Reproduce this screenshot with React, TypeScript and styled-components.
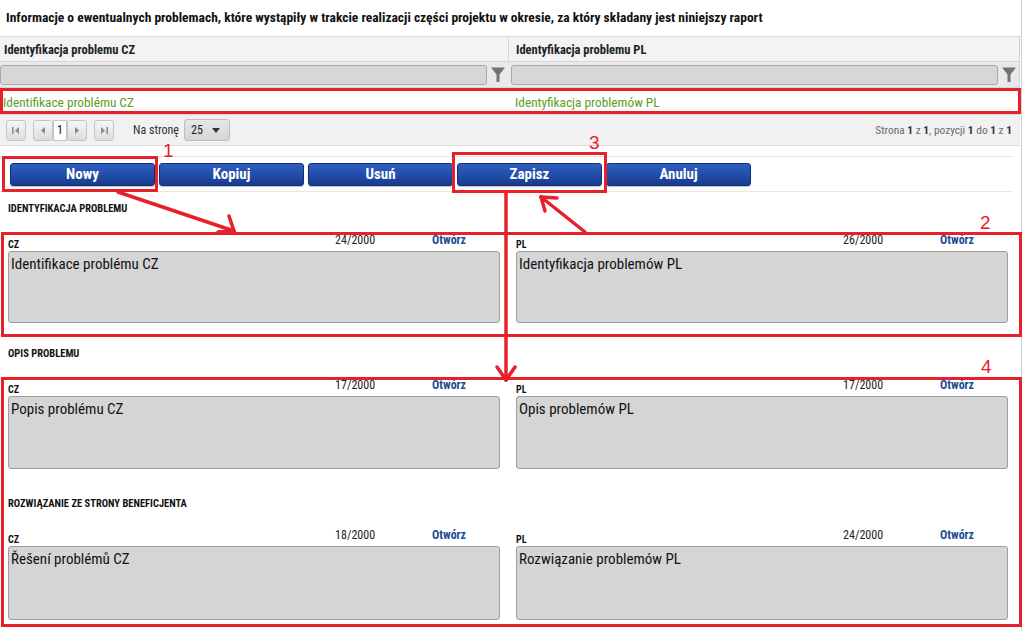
import React from 'react';
import styled, { createGlobalStyle } from 'styled-components';

const FONT = `"Roboto Condensed", "Liberation Sans", sans-serif`;

const Global = createGlobalStyle`
  html, body { margin: 0; padding: 0; background: #fff; }
  body { font-family: ${FONT}; color: #111; overflow: hidden; }
  * { box-sizing: border-box; }
`;

const Page = styled.div`
  position: relative;
  width: 1024px;
  height: 631px;
  overflow: hidden;
  background: #fff;
`;

const Frame = styled.div`
  width: 1022px;
  height: 631px;
  border-right: 1px solid #cdd3dc;
`;

const Title = styled.div`
  height: 37px;
  display: flex;
  align-items: center;
  padding: 0 0 2px 6px;
  font-size: 13.5px;
  font-weight: bold;
  color: #111;
  border-bottom: 1px solid #dcdcdc;
`;

const Grid = styled.div`
  width: 1020px;
  border-right: 1px solid #d0d0d0;
`;

const Row = styled.div<{ $h: number; $bg: string }>`
  display: grid;
  grid-template-columns: 508px 1fr;
  height: ${(p) => p.$h}px;
  background: ${(p) => p.$bg};
  border-bottom: 1px solid #d6d6d6;
`;

const HeadCell = styled.div`
  display: flex;
  align-items: center;
  padding: 1px 0 0 4px;
  font-size: 12.5px;
  font-weight: bold;
  color: #222;
  & + & { border-left: 1px solid #d8d8d8; padding-left: 7px; }
`;

const FilterCell = styled.div`
  display: flex;
  align-items: center;
  gap: 3px;
  padding: 0 2px 0 0;
  & + & { padding-left: 3px; }
`;

const FilterInput = styled.div`
  flex: 1;
  height: 20px;
  background: #d7d7d7;
  border: 1px solid #a9a9a9;
  border-radius: 3px;
`;

const Funnel = () => (
  <svg width="16" height="17" viewBox="0 0 16 17">
    <path d="M1 1.5 H15 L9.5 8.5 V16 H6.5 V8.5 Z" fill="#737373" />
  </svg>
);

const DataCell = styled.div`
  display: flex;
  align-items: center;
  padding: 2px 0 0 3px;
  font-size: 13.3px;
  color: #5a9e1c;
  & + & { padding-left: 7px; }
`;

const Pager = styled.div`
  height: 31px;
  display: flex;
  align-items: center;
  padding: 0 8px 0 6px;
  background: #f1f1f1;
  border-bottom: 1px solid #dcdcdc;
  width: 1020px;
`;

const PagerBtn = styled.div<{ $ml?: number }>`
  width: 20px;
  height: 21px;
  margin-left: ${(p) => p.$ml ?? 0}px;
  display: flex;
  align-items: center;
  justify-content: center;
  border: 1px solid #c4c4c4;
  border-radius: 3px;
  background: linear-gradient(#f7f7f7, #dcdcdc);
`;

const PageInput = styled.div`
  width: 14px;
  height: 21px;
  display: flex;
  align-items: center;
  justify-content: center;
  background: #fff;
  border: 1px solid #c4c4c4;
  font-size: 12px;
  color: #111;
`;

const PerPage = styled.span`
  margin-left: 19px;
  font-size: 12px;
  color: #333;
`;

const Select = styled.div`
  margin-left: 5px;
  width: 46px;
  height: 22px;
  display: flex;
  align-items: center;
  justify-content: space-between;
  padding: 0 9px 0 6px;
  background: linear-gradient(#e6e6e6, #d6d6d6);
  border: 1px solid #bcbcbc;
  border-radius: 3px;
  font-size: 12px;
  color: #222;
`;

const PagerInfo = styled.span`
  margin-left: auto;
  font-size: 11.4px;
  color: #6a6a6a;
  b { color: #333; }
`;

const Toolbar = styled.div`
  margin-top: 10px;
  width: 1012px;
  height: 36px;
  display: flex;
  align-items: center;
  gap: 4px;
  padding-left: 10px;
  border-top: 1px solid #e6e6e6;
  border-bottom: 1px solid #e6e6e6;
`;

const Button = styled.div`
  width: 145px;
  height: 23px;
  display: flex;
  align-items: center;
  justify-content: center;
  color: #fff;
  font-size: 15px;
  font-weight: bold;
  border-radius: 3px;
  border: 1px solid #142f7a;
  background: linear-gradient(#2f5ec0 0%, #2450ad 45%, #173b8c 100%);
  box-shadow: 0 1px 1px rgba(0, 0, 0, 0.25);
`;

const Section = styled.div<{ $mt: number }>`
  padding: ${(p) => p.$mt}px 17px 0 8px;
`;

const SectionTitle = styled.div`
  height: 11px;
  padding-top: 1px;
  line-height: 10px;
  font-size: 10.5px;
  font-weight: bold;
  color: #111;
  text-transform: uppercase;
`;

const Fields = styled.div`
  margin-top: 23px;
  display: grid;
  grid-template-columns: 492px 492px;
  column-gap: 16px;
`;

const FieldHead = styled.div`
  height: 14px;
  display: flex;
  align-items: flex-end;
  padding-bottom: 1px;
`;

const Lang = styled.span`
  font-size: 10px;
  font-weight: bold;
  color: #111;
  line-height: 10px;
`;

const Counter = styled.span`
  margin-left: auto;
  margin-right: 57px;
  font-size: 12px;
  color: #222;
  line-height: 12px;
  align-self: flex-start;
  margin-top: -3px;
`;

const Open = styled.span`
  margin-right: 34px;
  font-size: 12px;
  font-weight: bold;
  color: #1d4a92;
  line-height: 12px;
  align-self: flex-start;
  margin-top: -3px;
`;

const TextBox = styled.div<{ $h: number }>`
  height: ${(p) => p.$h}px;
  background: #d5d5d5;
  border: 1px solid #9d9d9d;
  border-radius: 3px;
  padding: 4px 2px;
  font-size: 15px;
  color: #111;
  line-height: 17px;
`;

const Overlay = styled.svg`
  position: absolute;
  left: 0;
  top: 0;
  pointer-events: none;
`;

const Num = styled.text`
  font-family: "Liberation Sans", sans-serif;
  font-size: 19px;
  fill: #e8202a;
`;

const Tri = ({ dir }: { dir: 'l' | 'r' }) => (
  <svg width="8" height="9" viewBox="0 0 8 9">
    {dir === 'l' ? <path d="M6 1 L2 4.5 L6 8 Z" fill="#8a8a8a" /> : <path d="M2 1 L6 4.5 L2 8 Z" fill="#8a8a8a" />}
  </svg>
);

const First = () => (
  <svg width="10" height="9" viewBox="0 0 10 9">
    <rect x="1" y="1" width="1.6" height="7" fill="#8a8a8a" />
    <path d="M8 1 L4 4.5 L8 8 Z" fill="#8a8a8a" />
  </svg>
);

const Last = () => (
  <svg width="10" height="9" viewBox="0 0 10 9">
    <path d="M2 1 L6 4.5 L2 8 Z" fill="#8a8a8a" />
    <rect x="7.4" y="1" width="1.6" height="7" fill="#8a8a8a" />
  </svg>
);

type F = { lang: string; count: string; text: string };
const FieldCol = ({ f, h }: { f: F; h: number }) => (
  <div>
    <FieldHead>
      <Lang>{f.lang}</Lang>
      <Counter>{f.count}</Counter>
      <Open>Otwórz</Open>
    </FieldHead>
    <TextBox $h={h}>{f.text}</TextBox>
  </div>
);

const sections: { title: string; mt: number; h: number; fields: F[] }[] = [
  {
    title: 'Identyfikacja problemu',
    mt: 11,
    h: 72,
    fields: [
      { lang: 'CZ', count: '24/2000', text: 'Identifikace problému CZ' },
      { lang: 'PL', count: '26/2000', text: 'Identyfikacja problemów PL' },
    ],
  },
  {
    title: 'Opis problemu',
    mt: 25,
    h: 73,
    fields: [
      { lang: 'CZ', count: '17/2000', text: 'Popis problému CZ' },
      { lang: 'PL', count: '17/2000', text: 'Opis problemów PL' },
    ],
  },
  {
    title: 'Rozwiązanie ze strony beneficjenta',
    mt: 29,
    h: 74,
    fields: [
      { lang: 'CZ', count: '18/2000', text: 'Řešení problémů CZ' },
      { lang: 'PL', count: '24/2000', text: 'Rozwiązanie problemów PL' },
    ],
  },
];

const RED = '#e8202a';

export default function App() {
  return (
    <Page>
      <Global />
      <Frame>
        <Title>
          Informacje o ewentualnych problemach, które wystąpiły w trakcie realizacji części projektu w okresie, za który składany jest niniejszy raport
        </Title>
        <Grid>
          <Row $h={25} $bg="#f3f3f3">
            <HeadCell>Identyfikacja problemu CZ</HeadCell>
            <HeadCell>Identyfikacja problemu PL</HeadCell>
          </Row>
          <Row $h={26} $bg="#e9e9e9">
            <FilterCell>
              <FilterInput />
              <Funnel />
            </FilterCell>
            <FilterCell>
              <FilterInput />
              <Funnel />
            </FilterCell>
          </Row>
          <Row $h={27} $bg="#ffffff">
            <DataCell>Identifikace problému CZ</DataCell>
            <DataCell>Identyfikacja problemów PL</DataCell>
          </Row>
        </Grid>
        <Pager>
          <PagerBtn>
            <First />
          </PagerBtn>
          <PagerBtn $ml={7}>
            <Tri dir="l" />
          </PagerBtn>
          <PageInput>1</PageInput>
          <PagerBtn>
            <Tri dir="r" />
          </PagerBtn>
          <PagerBtn $ml={7}>
            <Last />
          </PagerBtn>
          <PerPage>Na stronę</PerPage>
          <Select>
            <span>25</span>
            <svg width="8" height="5" viewBox="0 0 8 5">
              <path d="M0 0 H8 L4 5 Z" fill="#333" />
            </svg>
          </Select>
          <PagerInfo>
            Strona <b>1</b> z <b>1</b>, pozycji <b>1</b> do <b>1</b> z <b>1</b>
          </PagerInfo>
        </Pager>
        <Toolbar>
          <Button>Nowy</Button>
          <Button>Kopiuj</Button>
          <Button>Usuń</Button>
          <Button>Zapisz</Button>
          <Button>Anuluj</Button>
        </Toolbar>
        {sections.map((s) => (
          <Section key={s.title} $mt={s.mt}>
            <SectionTitle>{s.title}</SectionTitle>
            <Fields>
              {s.fields.map((f) => (
                <FieldCol key={f.lang} f={f} h={s.h} />
              ))}
            </Fields>
          </Section>
        ))}
      </Frame>
      <Overlay width="1024" height="631" viewBox="0 0 1024 631">
        <g fill="none" stroke={RED} strokeWidth="3">
          <rect x="1.5" y="89.5" width="1018" height="23" />
          <rect x="3.5" y="157.5" width="153" height="33" />
          <rect x="453.5" y="153.5" width="152" height="38" />
          <rect x="2.5" y="233.5" width="1018" height="102" />
          <rect x="2.5" y="378.5" width="1018" height="247" />
        </g>
        <g fill="none" stroke={RED} strokeWidth="3.5" strokeLinecap="round">
          <line x1="118" y1="192" x2="234" y2="231" />
          <line x1="234" y1="231" x2="229" y2="216" />
          <line x1="234" y1="231" x2="218" y2="232" />
          <line x1="585" y1="232" x2="541" y2="197" />
          <line x1="541" y1="197" x2="557" y2="198" />
          <line x1="541" y1="197" x2="545" y2="211" />
          <line x1="506" y1="192" x2="506" y2="380" />
          <line x1="506" y1="380" x2="497" y2="367" />
          <line x1="506" y1="380" x2="515" y2="367" />
        </g>
        <Num x="163" y="157">1</Num>
        <Num x="980" y="229">2</Num>
        <Num x="589" y="149">3</Num>
        <Num x="981" y="373">4</Num>
      </Overlay>
    </Page>
  );
}
